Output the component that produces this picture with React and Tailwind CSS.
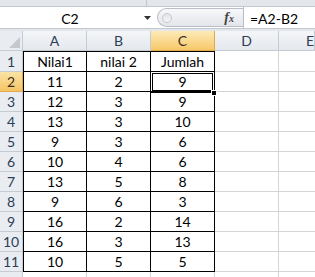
import React from "react";

const rows = [
  ["Nilai1", "nilai 2", "Jumlah"],
  ["11", "2", "9"],
  ["12", "3", "9"],
  ["13", "3", "10"],
  ["9", "3", "6"],
  ["10", "4", "6"],
  ["13", "5", "8"],
  ["9", "6", "3"],
  ["16", "2", "14"],
  ["16", "3", "13"],
  ["10", "5", "5"],
];

const RowHeader = ({ n, active, tall }) => (
  <div
    className={`w-[23px] shrink-0 flex items-center justify-center border-r border-b text-[14px] ${
      active
        ? "bg-linear-to-b from-[#fbe3a4] to-[#f5c462] border-[#e2a94b] text-[#3a3024]"
        : "bg-[#e9ecf0] border-[#c5cbd3] text-[#2c3e55]"
    } ${tall ? "h-[21px]" : "h-[20px]"}`}
  >
    {n}
  </div>
);

export default function App() {
  return (
    <div className="w-[315px] h-[277px] overflow-hidden bg-white font-['Lato',sans-serif] text-black">
      {/* ribbon edge */}
      <div className="h-[7px] flex bg-[#e3e7ec] border-b border-[#c2c8d0]">
        <div className="w-[147px] border-r border-[#c2c8d0]" />
      </div>

      {/* formula bar */}
      <div className="h-[21px] flex items-stretch bg-[#e3e7ec]">
        <div className="w-[140px] bg-white flex items-center justify-center text-[14px] pt-[1px]">C2</div>
        <div className="w-[14px] bg-white flex items-center justify-center">
          <svg width="7" height="4" viewBox="0 0 7 4">
            <path d="M0 0h7L3.5 4z" fill="#333" />
          </svg>
        </div>
        <div className="w-[89px] flex items-center pl-[3px] bg-white">
          <div className="h-[19px] flex-1 flex items-center rounded-l-full border border-r-0 border-[#b9bec6] bg-linear-to-b from-[#f7f8fa] to-[#e2e5ea]">
            <div className="w-[10px] h-[10px] ml-[4px] rounded-full border border-[#c4c8ce] bg-linear-to-b from-[#e2e4e8] to-[#f5f6f7]" />
            <span className="ml-auto mr-[9px] font-['Liberation_Serif',serif] italic font-bold text-[14px] text-[#444] leading-none">
              f<span className="text-[10px]">x</span>
            </span>
          </div>
        </div>
        <div className="flex-1 bg-white border-l border-[#b9bec6] flex items-center pl-[6px] text-[14px] pt-[1px]">
          =A2-B2
        </div>
      </div>
      <div className="h-[3px] bg-[#e3e7ec] border-t border-[#c2c8d0]" />

      {/* sheet */}
      <div className="relative">
        {/* column headers */}
        <div className="flex h-[20px]">
          <div className="w-[23px] shrink-0 relative bg-[#e9ecf0] border-r border-b border-[#c5cbd3]">
            <svg className="absolute right-[2px] bottom-[2px]" width="11" height="11" viewBox="0 0 11 11">
              <path d="M11 0v11H0z" fill="#c4c9d0" />
            </svg>
          </div>
          {["A", "B", "C", "D", "E"].map((c) => (
            <div
              key={c}
              className={`${c === "E" ? "flex-1 justify-start pl-[27px]" : "w-[64px] shrink-0 justify-center"} flex items-center border-r border-b text-[14px] ${
                c === "C"
                  ? "bg-linear-to-b from-[#fdeab8] to-[#f7c867] border-[#e2a94b] text-[#3a3024]"
                  : "bg-linear-to-b from-[#f4f6f8] to-[#e4e8ed] border-[#c5cbd3] text-[#2c3e55]"
              }`}
            >
              {c}
            </div>
          ))}
        </div>

        {/* data rows */}
        {rows.map((r, i) => (
          <div key={i} className="flex">
            <RowHeader n={i + 1} active={i === 1} tall={i === 0} />
            {r.map((v, j) => (
              <div
                key={j}
                className={`w-[64px] shrink-0 flex items-center justify-center border-r border-b border-black text-[14px] ${
                  i === 0 ? "h-[21px] border-t" : "h-[20px]"
                } ${j === 0 ? "border-l" : ""}`}
              >
                {v}
              </div>
            ))}
            <div className={`w-[64px] shrink-0 border-r border-b border-[#d4d4d4] ${i === 0 ? "h-[21px]" : "h-[20px]"}`} />
            <div className={`flex-1 border-b border-[#d4d4d4] ${i === 0 ? "h-[21px]" : "h-[20px]"}`} />
          </div>
        ))}
        <div className="flex h-[20px]">
          <div className="w-[23px] shrink-0 bg-[#e9ecf0] border-r border-[#c5cbd3]" />
          <div className="w-[64px] shrink-0 border-r border-[#d4d4d4]" />
          <div className="w-[64px] shrink-0 border-r border-[#d4d4d4]" />
          <div className="w-[64px] shrink-0 border-r border-[#d4d4d4]" />
          <div className="w-[64px] shrink-0 border-r border-[#d4d4d4]" />
          <div className="flex-1" />
        </div>

        {/* active cell C2 */}
        <div className="absolute left-[150px] top-[40px] w-[65px] h-[22px] border-[3px] border-double border-black pointer-events-none" />
        <div className="absolute left-[211px] top-[59px] w-[6px] h-[6px] bg-black border border-white" />
      </div>
    </div>
  );
}
